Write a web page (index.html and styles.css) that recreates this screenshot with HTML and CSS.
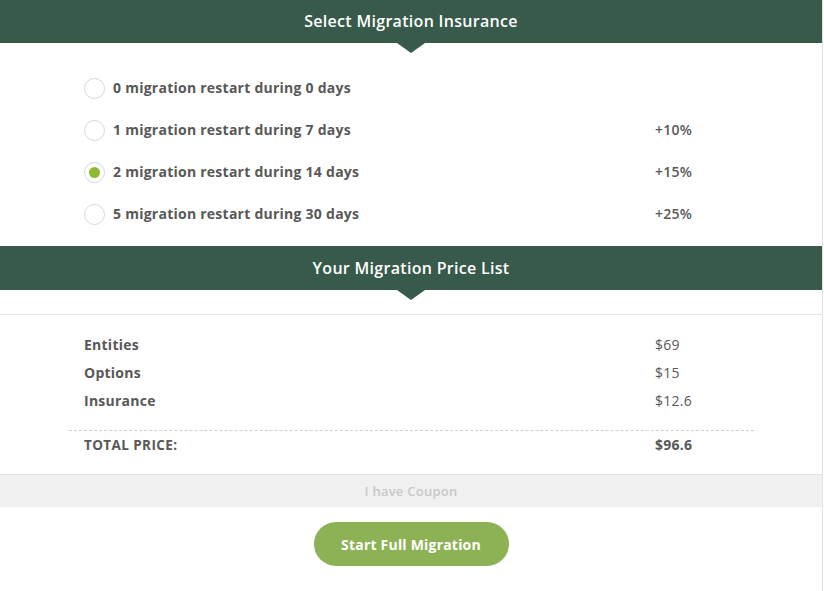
FILE: index.html
```
<!DOCTYPE html>
<html lang="en">
<head>
    <meta charset="UTF-8">
    <meta name="viewport" content="width=device-width, initial-scale=1.0">
    <title>Migration Insurance</title>
    <link rel="stylesheet" href="styles.css">
</head>
<body>
    <div class="wizard">
        <h2 class="step-title">Select Migration Insurance</h2>
        <div class="insurance-list">
            <label class="insurance-row">
                <span class="radio"></span>
                <span class="insurance-name">0 migration restart during 0 days</span>
                <span class="insurance-price"></span>
            </label>
            <label class="insurance-row">
                <span class="radio"></span>
                <span class="insurance-name">1 migration restart during 7 days</span>
                <span class="insurance-price">+10%</span>
            </label>
            <label class="insurance-row">
                <span class="radio checked"></span>
                <span class="insurance-name">2 migration restart during 14 days</span>
                <span class="insurance-price">+15%</span>
            </label>
            <label class="insurance-row">
                <span class="radio"></span>
                <span class="insurance-name">5 migration restart during 30 days</span>
                <span class="insurance-price">+25%</span>
            </label>
        </div>

        <h2 class="step-title tall">Your Migration Price List</h2>
        <div class="price-list">
            <div class="price-row">
                <span class="price-label">Entities</span>
                <span class="price-value">$69</span>
            </div>
            <div class="price-row">
                <span class="price-label">Options</span>
                <span class="price-value">$15</span>
            </div>
            <div class="price-row">
                <span class="price-label">Insurance</span>
                <span class="price-value">$12.6</span>
            </div>
            <div class="price-row total">
                <span class="price-label">TOTAL PRICE:</span>
                <span class="price-value">$96.6</span>
            </div>
        </div>

        <div class="coupon">I have Coupon</div>

        <div class="actions">
            <button class="start-btn">Start Full Migration</button>
        </div>
    </div>
</body>
</html>
```

FILE: styles.css
```
body {
    font-family: "Open Sans", sans-serif;
    background-color: #fff;
    margin: 0;
    color: #585858;
    letter-spacing: 0.25px;
}
.wizard {
    width: 822px;
    height: 591px;
    border-right: 1px solid #e2e2e2;
}
.step-title {
    position: relative;
    margin: 0;
    height: 43px;
    line-height: 42px;
    background-color: #375a4b;
    color: #fff;
    font-size: 16px;
    font-weight: 600;
    letter-spacing: 0.3px;
    text-align: center;
}
.step-title.tall {
    height: 44px;
    line-height: 44px;
}
.step-title::after {
    content: "";
    position: absolute;
    left: 50%;
    top: 100%;
    margin-left: -14px;
    border-left: 14px solid transparent;
    border-right: 14px solid transparent;
    border-top: 10px solid #375a4b;
}
/* insurance options */
.insurance-list {
    padding: 23px 0 12px 84px;
}
.insurance-row {
    display: grid;
    grid-template-columns: 29px 542px 1fr;
    align-items: center;
    height: 42px;
    font-size: 14px;
    font-weight: 700;
}
.radio {
    width: 19px;
    height: 19px;
    border: 1px solid #d6d6d6;
    border-radius: 50%;
    display: flex;
    justify-content: center;
    align-items: center;
    margin-top: 3px;
}
.radio.checked::before {
    content: "";
    width: 11px;
    height: 11px;
    border-radius: 50%;
    background-color: #8cba32;
}
.insurance-price {
    font-weight: 600;
}
/* price list */
.price-list {
    margin-top: 24px;
    border-top: 1px solid #e6e6e6;
    border-bottom: 1px solid #e2e2e2;
    padding: 15px 0 16px;
}
.price-row {
    display: grid;
    grid-template-columns: 571px 1fr;
    align-items: center;
    height: 28px;
    padding-left: 84px;
    font-size: 14px;
}
.price-label {
    font-weight: 700;
}
.price-row.total {
    margin: 16px 68px 0 69px;
    padding-left: 15px;
    grid-template-columns: 571px 1fr;
    border-top: 1px dashed #cfcfcf;
    height: 27px;
}
.price-row.total .price-label {
    font-size: 13.5px;
    letter-spacing: 0.4px;
}
.price-row.total .price-value {
    font-weight: 700;
}
.coupon {
    background-color: #f0f0f0;
    color: #c8c8c8;
    font-size: 13px;
    font-weight: 600;
    text-align: center;
    height: 32px;
    line-height: 32px;
}
.actions {
    display: flex;
    justify-content: center;
    padding-top: 15px;
}
.start-btn {
    font-family: "Open Sans", sans-serif;
    background-color: #8db255;
    color: #fff;
    width: 195px;
    height: 44px;
    border: none;
    border-radius: 22px;
    font-size: 14px;
    font-weight: 700;
    letter-spacing: 0.2px;
    cursor: pointer;
}
```
